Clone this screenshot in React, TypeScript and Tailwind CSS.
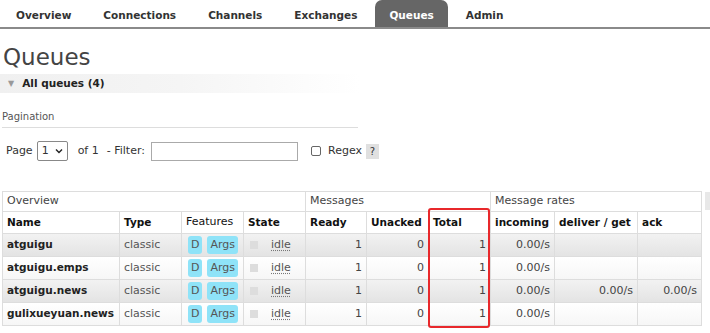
import React from 'react';

type Queue = {
  name: string;
  ready: number;
  unacked: number;
  total: number;
  incoming: string;
  deliver: string;
  ack: string;
};

const queues: Queue[] = [
  { name: 'atguigu', ready: 1, unacked: 0, total: 1, incoming: '0.00/s', deliver: '', ack: '' },
  { name: 'atguigu.emps', ready: 1, unacked: 0, total: 1, incoming: '0.00/s', deliver: '', ack: '' },
  { name: 'atguigu.news', ready: 1, unacked: 0, total: 1, incoming: '0.00/s', deliver: '0.00/s', ack: '0.00/s' },
  { name: 'gulixueyuan.news', ready: 1, unacked: 0, total: 1, incoming: '0.00/s', deliver: '', ack: '' },
];

const tabs = ['Overview', 'Connections', 'Channels', 'Exchanges', 'Queues', 'Admin'];

export default function App() {
  return (
    <div
      className="relative w-[710px] h-[333px] overflow-hidden bg-white text-[#484848]"
      style={{ fontFamily: '"DejaVu Sans", Verdana, sans-serif' }}
    >
      {/* top navigation */}
      <div className="flex items-end h-[29px] pl-[2px] border-b-2 border-[#8a8a8a]">
        {tabs.map((t) => (
          <div
            key={t}
            className={
              t === 'Queues'
                ? 'h-[27px] px-[14px] pt-[4px] flex items-center rounded-t-[7px] bg-[#666] text-white text-[10.5px] font-bold mr-[4px]'
                : 'h-[27px] px-[14px] pt-[4px] flex items-center text-[#333] text-[10.5px] font-bold mr-[4px]'
            }
          >
            {t}
          </div>
        ))}
      </div>

      {/* heading */}
      <h1 className="pl-[3px] pt-[15px] text-[23px] leading-[26px] text-[#444] font-normal">Queues</h1>
      <div className="mt-[4px] h-[19px] w-[360px] flex items-center gap-[8px] pl-[8px] bg-gradient-to-r from-[#f0f0f0] via-[#f5f5f5] to-white text-[10.5px] font-bold text-[#222]">
        <span className="text-[#999] text-[8px]">▼</span>
        <span>All queues (4)</span>
      </div>

      {/* pagination */}
      <div className="mt-[16px] mx-[2px] w-[356px] pb-[3px] border-b border-[#ddd] text-[10px] text-[#555]">
        Pagination
      </div>
      <div className="mt-[13px] flex items-center h-[20px] pl-[6px] text-[11px] text-[#333]">
        <span>Page</span>
        <div className="ml-[4px] w-[31px] h-[20px] border border-[#888] rounded-[2px] flex items-center justify-between px-[4px] bg-white">
          <span>1</span>
          <svg width="8" height="6" viewBox="0 0 8 6">
            <path d="M1 1.5 L4 4.5 L7 1.5" fill="none" stroke="#222" strokeWidth="1.4" />
          </svg>
        </div>
        <span className="ml-[10px]">of 1</span>
        <span className="ml-[8px]">- Filter:</span>
        <div className="ml-[6px] w-[147px] h-[19px] border border-[#aaa] bg-white" />
        <div className="ml-[13px] w-[10px] h-[10px] border border-[#666] rounded-[2px]" />
        <span className="ml-[7px]">Regex</span>
        <span className="ml-[4px] w-[13px] h-[15px] bg-[#e0e0e0] flex items-center justify-center text-[10px]">?</span>
      </div>

      {/* table */}
      <div className="mt-[30px] ml-[2px] flex items-start">
        <table className="border-collapse text-[11px] table-fixed w-[699px]">
          <colgroup>
            <col className="w-[117px]" />
            <col className="w-[62px]" />
            <col className="w-[62px]" />
            <col className="w-[62px]" />
            <col className="w-[61px]" />
            <col className="w-[62px]" />
            <col className="w-[62px]" />
            <col className="w-[64px]" />
            <col className="w-[83px]" />
            <col className="w-[64px]" />
          </colgroup>
          <thead>
            <tr className="h-[20px] text-[#444]">
              <th colSpan={4} className="border border-[#ddd] text-left font-normal px-[4px]">Overview</th>
              <th colSpan={3} className="border border-[#ddd] text-left font-normal px-[4px]">Messages</th>
              <th colSpan={3} className="border border-[#ddd] text-left font-normal px-[4px]">Message rates</th>
            </tr>
            <tr className="h-[22px] text-[#111] text-[10.5px] whitespace-nowrap">
              <th className="border border-[#ddd] text-left font-bold px-[4px]">Name</th>
              <th className="border border-[#ddd] text-left font-bold px-[4px]">Type</th>
              <th className="border border-[#ddd] text-left font-normal text-[11px] px-[4px]">Features</th>
              <th className="border border-[#ddd] text-left font-bold px-[4px]">State</th>
              <th className="border border-[#ddd] text-left font-bold px-[4px]">Ready</th>
              <th className="border border-[#ddd] text-left font-bold px-[4px]">Unacked</th>
              <th className="border border-[#ddd] text-left font-bold px-[4px]">Total</th>
              <th className="border border-[#ddd] text-left font-bold px-[4px]">incoming</th>
              <th className="border border-[#ddd] text-left font-bold px-[4px]">deliver / get</th>
              <th className="border border-[#ddd] text-left font-bold px-[4px]">ack</th>
            </tr>
          </thead>
          <tbody>
            {queues.map((q, i) => (
              <tr
                key={q.name}
                className={
                  i % 2 === 0
                    ? 'h-[23px] bg-gradient-to-b from-[#f2f2f2] to-[#e3e3e3]'
                    : 'h-[23px] bg-gradient-to-b from-white to-[#f6f6f6]'
                }
              >
                <td className="border border-[#ddd] px-[4px] font-bold text-[10.5px] text-[#222] whitespace-nowrap">{q.name}</td>
                <td className="border border-[#ddd] px-[4px] align-top pt-[3px] text-[#555]">classic</td>
                <td className="border border-[#ddd] px-[4px]">
                  <div className="flex gap-[5px] pl-[2px]">
                    <span className="bg-[#8fe3f8] rounded-[3px] px-[3px] py-[1px] text-[#555]">D</span>
                    <span className="bg-[#8fe3f8] rounded-[3px] px-[3px] py-[1px] text-[#555]">Args</span>
                  </div>
                </td>
                <td className="border border-[#ddd] px-[4px]">
                  <div className="flex items-center">
                    <span className="ml-[2px] w-[8px] h-[8px] bg-[#ddd]" />
                    <span className="ml-[13px] underline decoration-dotted decoration-[#777] underline-offset-2 text-[#555]">idle</span>
                  </div>
                </td>
                <td className="border border-[#ddd] px-[4px] text-right text-[#444]">{q.ready}</td>
                <td className="border border-[#ddd] px-[4px] text-right text-[#444]">{q.unacked}</td>
                <td className="border border-[#ddd] px-[4px] text-right text-[#444]">{q.total}</td>
                <td className="border border-[#ddd] px-[4px] text-right text-[#444]">{q.incoming}</td>
                <td className="border border-[#ddd] px-[4px] text-right text-[#444]">{q.deliver}</td>
                <td className="border border-[#ddd] px-[4px] text-right text-[#444]">{q.ack}</td>
              </tr>
            ))}
          </tbody>
        </table>
        <div className="ml-[3px] mt-[1px] w-[8px] h-[18px] bg-[#e8e8e8]" />
      </div>

      {/* annotation around Total column */}
      <div className="absolute left-[428px] top-[208px] w-[62px] h-[120px] border-2 border-[#e8282b] rounded-[3px]" />
    </div>
  );
}
